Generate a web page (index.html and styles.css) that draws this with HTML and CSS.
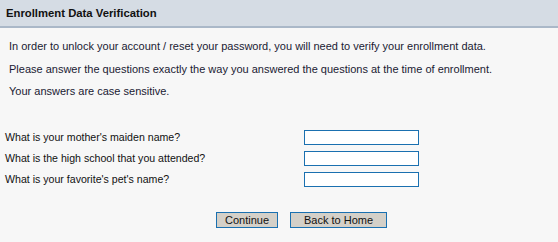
FILE: index.html
```html
<!DOCTYPE html>
<html>
<head>
<meta charset="utf-8">
<title>Enrollment Data Verification</title>
<link rel="stylesheet" href="styles.css">
</head>
<body>
<div class="header">Enrollment Data Verification</div>
<div class="intro">
  <p>In order to unlock your account / reset your password, you will need to verify your enrollment data.</p>
  <p>Please answer the questions exactly the way you answered the questions at the time of enrollment.</p>
  <p>Your answers are case sensitive.</p>
</div>
<div class="questions">
  <div class="row"><label>What is your mother's maiden name?</label><input type="text" class="field"></div>
  <div class="row"><label>What is the high school that you attended?</label><input type="text" class="field"></div>
  <div class="row"><label>What is your favorite's pet's name?</label><input type="text" class="field"></div>
</div>
<div class="actions">
  <button class="btn btn-continue">Continue</button>
  <button class="btn btn-home">Back to Home</button>
</div>
</body>
</html>
```
FILE: styles.css
```css
html, body {
  margin: 0;
  padding: 0;
  background: #f7f7f7;
  font-family: "Liberation Sans", Arial, sans-serif;
}
.header {
  height: 26px;
  line-height: 26px;
  background: #d5dce4;
  border-bottom: 2px solid #aab8c8;
  padding-left: 6px;
  font-weight: bold;
  font-size: 11.3px;
  color: #111;
}
.intro {
  padding: 7px 0 0 9px;
}
.intro p {
  margin: 0;
  font-size: 11px;
  line-height: 22.5px;
  color: #1a1a33;
}
.questions {
  padding: 27px 0 0 5px;
  display: flex;
  flex-direction: column;
  gap: 6px;
}
.row {
  display: flex;
  align-items: center;
  height: 15px;
}
.row label {
  width: 299px;
  font-size: 10.6px;
  color: #111;
}
.field {
  box-sizing: border-box;
  width: 115px;
  height: 15px;
  margin: 0;
  padding: 0 2px;
  border: 1px solid #1a70b0;
  background: #fff;
}
.actions {
  display: flex;
  gap: 12px;
  padding: 25px 0 0 216px;
}
.btn {
  box-sizing: border-box;
  height: 16px;
  margin: 0;
  padding: 0;
  border: 1px solid #1a70b0;
  background: #d4d0c8;
  font-family: "Liberation Sans", Arial, sans-serif;
  font-size: 11px;
  line-height: 14px;
  color: #111;
}
.btn-continue { width: 62px; }
.btn-home { width: 97px; }
```
